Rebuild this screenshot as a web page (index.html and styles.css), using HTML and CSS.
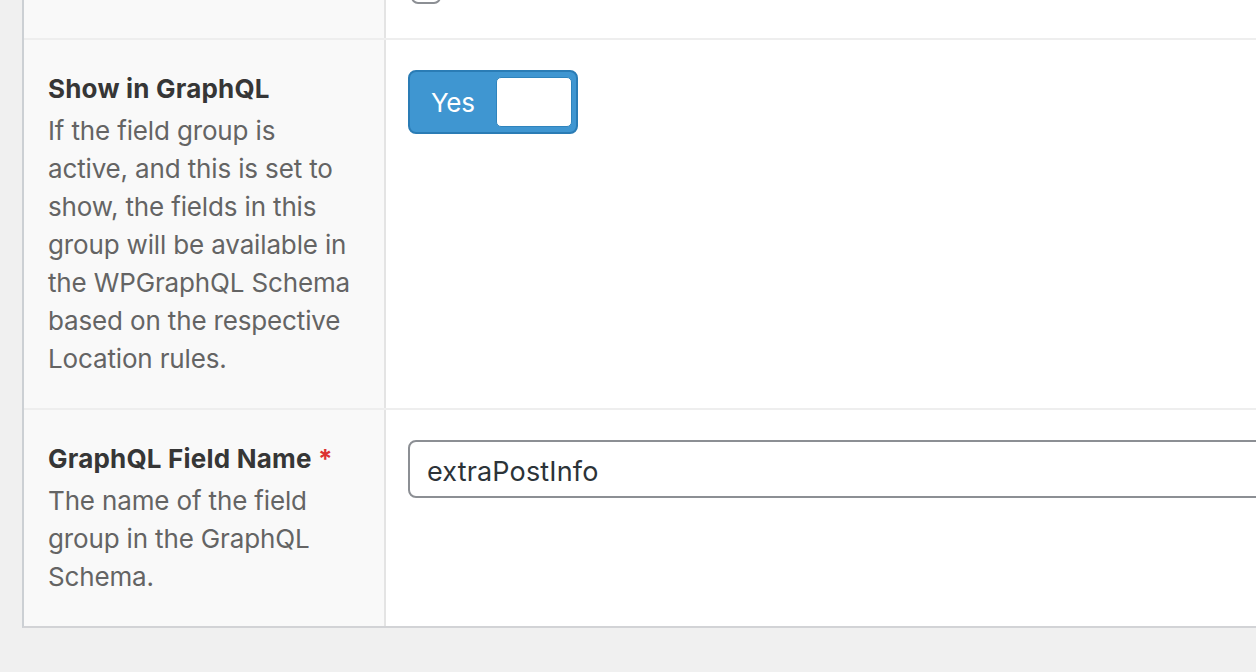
FILE: index.html
```html
<!DOCTYPE html>
<html lang="en">
<head>
<meta charset="utf-8">
<title>ACF GraphQL settings</title>
<link rel="stylesheet" href="styles.css">
</head>
<body>
<div class="panel">
  <div class="row row-top">
    <div class="label-col"></div>
    <div class="input-col">
      <span class="checkbox"></span>
    </div>
  </div>
  <div class="row row-show">
    <div class="label-col">
      <div class="label">Show in GraphQL</div>
      <p class="desc">If the field group is<br>active, and this is set to<br>show, the fields in this<br>group will be available in<br>the WPGraphQL Schema<br>based on the respective<br>Location rules.</p>
    </div>
    <div class="input-col">
      <div class="toggle">
        <span class="toggle-text">Yes</span>
        <span class="toggle-knob"></span>
      </div>
    </div>
  </div>
  <div class="row row-name">
    <div class="label-col">
      <div class="label">GraphQL Field Name <span class="req">*</span></div>
      <p class="desc">The name of the field<br>group in the GraphQL<br>Schema.</p>
    </div>
    <div class="input-col">
      <div class="text-input">extraPostInfo</div>
    </div>
  </div>
</div>
</body>
</html>
```

FILE: styles.css
```css
html, body {
  margin: 0;
  padding: 0;
}
body {
  background: #f0f0f0;
  width: 1256px;
  height: 672px;
  overflow: hidden;
  font-family: "Inter", "Liberation Sans", sans-serif;
}
.panel {
  margin-left: 22px;
  width: 1234px;
  overflow: hidden;
  border-left: 2px solid #ccd0d4;
  border-bottom: 2px solid #d2d3d6;
  background: #fff;
}
.row {
  display: flex;
  border-top: 2px solid #eeeeee;
  box-sizing: border-box;
}
.row-top {
  border-top: none;
  height: 38px;
}
.row-show {
  height: 370px;
}
.row-name {
  height: 218px;
}
.label-col {
  width: 362px;
  flex: none;
  box-sizing: border-box;
  background: #f9f9f9;
  border-right: 2px solid #e4e4e4;
  padding: 30px 24px;
}
.row-top .label-col {
  padding: 0;
}
.input-col {
  flex: 1;
  min-width: 0;
  padding: 30px 22px;
  position: relative;
}
.row-top .input-col {
  padding: 0;
}
.checkbox {
  position: absolute;
  left: 25px;
  top: -26px;
  width: 26px;
  height: 26px;
  border: 2px solid #8c8f94;
  border-radius: 7px;
  background: #fff;
}
.label {
  font-size: 26px;
  font-weight: 700;
  line-height: 38px;
  color: #363636;
  letter-spacing: 0.2px;
}
.req {
  color: #dc3232;
}
.desc {
  margin: 4px 0 0;
  font-size: 26px;
  line-height: 38px;
  color: #646464;
  letter-spacing: -0.15px;
}
.toggle {
  width: 170px;
  height: 64px;
  box-sizing: border-box;
  border: 2px solid #2a7cb5;
  border-radius: 8px;
  background: #3f96d1;
  display: flex;
  align-items: center;
  justify-content: space-between;
  padding: 6px 4px 6px 21px;
}
.toggle-text {
  color: #ffffff;
  font-size: 26px;
  letter-spacing: -0.3px;
}
.toggle-knob {
  width: 76px;
  height: 50px;
  background: #ffffff;
  border-radius: 5px;
  box-sizing: border-box;
  border: 1px solid #2f84bd;
}
.text-input {
  box-sizing: border-box;
  height: 58px;
  width: 1000px;
  border: 2px solid #8c8f94;
  border-radius: 8px;
  background: #fff;
  padding: 4px 17px 0;
  display: flex;
  align-items: center;
  font-size: 27px;
  color: #2c3338;
  letter-spacing: 0.15px;
}
```
